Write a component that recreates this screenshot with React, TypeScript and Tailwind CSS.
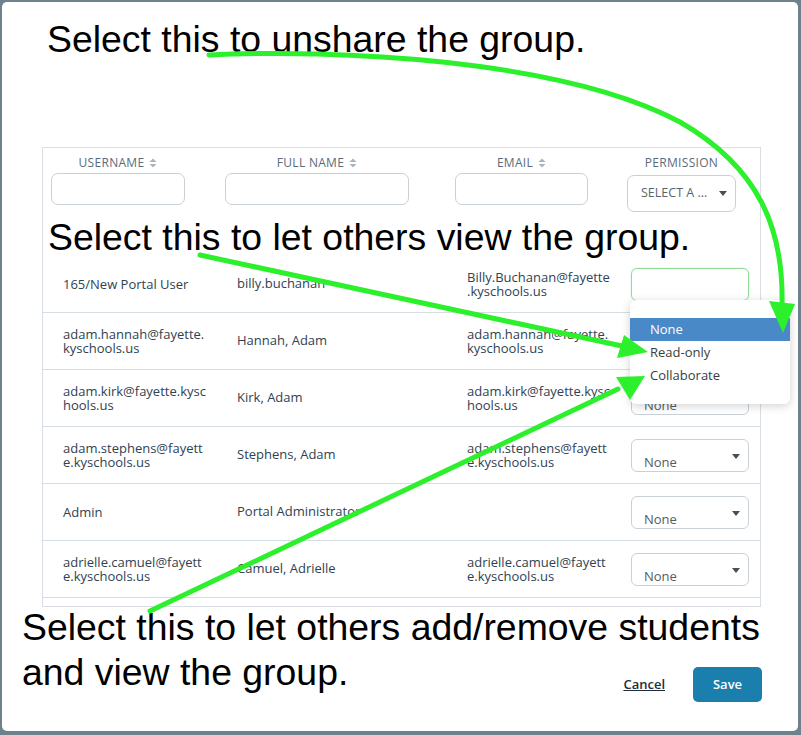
import React from "react";

type Row = {
  user: string[];
  name: string;
  email: string[];
  focused?: boolean;
};

const rows: Row[] = [
  {
    user: ["165/New Portal User"],
    name: "billy.buchanan",
    email: ["Billy.Buchanan@fayette", ".kyschools.us"],
    focused: true,
  },
  {
    user: ["adam.hannah@fayette.", "kyschools.us"],
    name: "Hannah, Adam",
    email: ["adam.hannah@fayette.", "kyschools.us"],
  },
  {
    user: ["adam.kirk@fayette.kysc", "hools.us"],
    name: "Kirk, Adam",
    email: ["adam.kirk@fayette.kysc", "hools.us"],
  },
  {
    user: ["adam.stephens@fayett", "e.kyschools.us"],
    name: "Stephens, Adam",
    email: ["adam.stephens@fayett", "e.kyschools.us"],
  },
  { user: ["Admin"], name: "Portal Administrator", email: [] },
  {
    user: ["adrielle.camuel@fayett", "e.kyschools.us"],
    name: "Camuel, Adrielle",
    email: ["adrielle.camuel@fayett", "e.kyschools.us"],
  },
];

const SortIcon = () => (
  <svg width="8" height="10" viewBox="0 0 8 10" className="ml-[5px]">
    <path d="M4 0.5 L7.5 4 L0.5 4 Z" fill="#aab4bd" />
    <path d="M4 9.5 L7.5 6 L0.5 6 Z" fill="#aab4bd" />
  </svg>
);

const Caret = () => (
  <svg width="8" height="5" viewBox="0 0 8 5">
    <path d="M0 0 L8 0 L4 5 Z" fill="#4a4f55" />
  </svg>
);

const HeaderCell = ({
  label,
  offset,
  width,
  sortable = true,
  select = false,
}: {
  label: string;
  offset: string;
  width: string;
  sortable?: boolean;
  select?: boolean;
}) => (
  <div className={`flex flex-col items-center pt-[7px] ${offset} ${width}`}>
    <div className="flex items-center h-[16px] text-[12px] tracking-[0.3px] text-[#5a6c7b] uppercase">
      {label}
      {sortable && <SortIcon />}
    </div>
    {select ? (
      <div className="mt-[4px] w-full h-[37px] rounded-[7px] border border-[#c9d0d6] flex items-center justify-between pl-[13px] pr-[8px] text-[12.5px] text-[#5a6570]">
        <span>SELECT A ...</span>
        <Caret />
      </div>
    ) : (
      <div className="mt-[2px] w-full h-[32px] rounded-[7px] border border-[#c9d0d6]" />
    )}
  </div>
);

const PermissionSelect = ({ focused, hidden }: { focused?: boolean; hidden?: boolean }) =>
  focused ? (
    <div className="w-[118px] h-[33px] rounded-[6px] border border-[#8fdc99] shadow-[0_0_2px_#c8f0cd]" />
  ) : (
    <div className="relative w-[118px] h-[33px] rounded-[6px] border border-[#c9d0d6] text-[13px] text-[#555b61]">
      {!hidden && (
        <span className="absolute left-[12px] top-[14px] leading-[16px]">None</span>
      )}
      <span className="absolute right-[8px] top-[14px] flex">
        <Caret />
      </span>
    </div>
  );

const Lines = ({ lines }: { lines: string[] }) => (
  <div>
    {lines.map((l) => (
      <div key={l} className="leading-[14px]">
        {l}
      </div>
    ))}
  </div>
);

export default function App() {
  return (
    <div className="relative w-[801px] h-[735px] overflow-hidden bg-[#6e818c] pt-[2px] pl-[2px]">
      <div className="w-[796px] h-[729px] bg-white rounded-[5px] flex flex-col font-['Open_Sans',sans-serif]">
        <div className="ml-[40px] mt-[145px] w-[719px] h-[460px] overflow-hidden border border-[#d8dee4]">
          <div className="grid grid-cols-[173px_230px_175px_139px] h-[108px]">
            <HeaderCell label="Username" offset="ml-[8px]" width="w-[134px]" />
            <HeaderCell label="Full Name" offset="ml-[9px]" width="w-[184px]" />
            <HeaderCell label="Email" offset="ml-[9px]" width="w-[133px]" />
            <HeaderCell
              label="Permission"
              offset="ml-[6px]"
              width="w-[109px]"
              sortable={false}
              select
            />
          </div>
          {rows.map((r, i) => (
            <div
              key={i}
              className="grid grid-cols-[173px_230px_175px_139px] h-[57px] items-center border-b border-[#d5dce2] text-[13px] text-[#2f4253]"
            >
              <div className="pl-[20px]">
                <Lines lines={r.user} />
              </div>
              <div className="pl-[21px]">{r.name}</div>
              <div className="pl-[21px]">
                <Lines lines={r.email} />
              </div>
              <div className="pl-[10px]">
                {/* row 2's value sits under the open menu */}
                <PermissionSelect focused={r.focused} hidden={i === 1} />
              </div>
            </div>
          ))}
          <div className="h-[57px]" />
        </div>

        <div className="flex justify-end items-center mt-[60px] pr-[36px]">
          <button className="mr-[28px] text-[13px] font-semibold underline text-[#1f2c3a]">
            Cancel
          </button>
          <button className="w-[69px] h-[35px] rounded-[5px] bg-[#1b7fad] text-white text-[13px] font-semibold">
            Save
          </button>
        </div>
      </div>

      {/* open dropdown menu */}
      <div className="absolute left-[630px] top-[300px] w-[160px] h-[104px] rounded-[6px] bg-white shadow-[0_2px_10px_rgba(0,0,0,0.18)] py-[18px] text-[13px] font-['Open_Sans',sans-serif] text-[#3a3d40]">
        <div className="h-[23px] flex items-center pl-[20px] bg-[#4a89c8] text-white">None</div>
        <div className="h-[23px] flex items-center pl-[20px]">Read-only</div>
        <div className="h-[23px] flex items-center pl-[20px]">Collaborate</div>
      </div>

      {/* annotations */}
      <div className="absolute left-[47px] top-[21px] text-[37.4px] leading-none text-black font-['Liberation_Sans',Arial,sans-serif]">
        Select this to unshare the group.
      </div>
      <div className="absolute left-[48px] top-[219px] text-[37.4px] leading-none text-black font-['Liberation_Sans',Arial,sans-serif]">
        Select this to let others view the group.
      </div>
      <div className="absolute left-[22px] top-[605px] text-[37.4px] leading-[45px] text-black font-['Liberation_Sans',Arial,sans-serif]">
        <div>Select this to let others add/remove students</div>
        <div>and view the group.</div>
      </div>

      <svg
        className="absolute left-0 top-0 pointer-events-none"
        width="801"
        height="735"
        viewBox="0 0 801 735"
      >
        <g stroke="#2cf02c" strokeWidth="5" fill="none" strokeLinecap="round">
          <path d="M209 55 C 330 49, 560 58, 680 122 C 760 168, 784 230, 782 306" />
          <path d="M200 255 L 622 346" />
          <path d="M150 611 L 618 389" />
        </g>
        <g fill="#2cf02c">
          <path d="M783 333 L 769 301 L 795 304 Z" />
          <path d="M648 352 L 617 358 L 624 335 Z" />
          <path d="M645 376 L 630 400 L 616 377 Z" />
        </g>
      </svg>
    </div>
  );
}
